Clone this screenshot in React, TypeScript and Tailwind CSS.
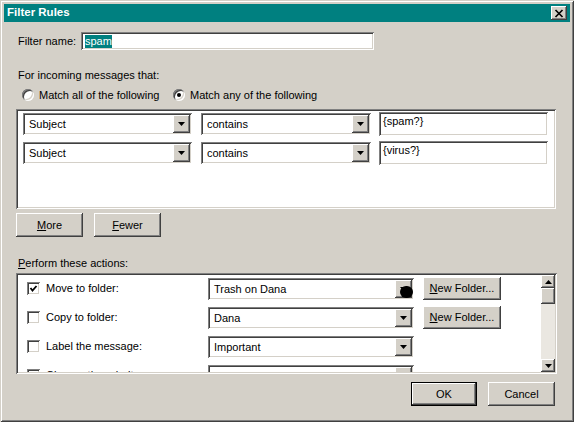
import React from 'react'

const sunken =
  'shadow-[inset_1px_1px_0_#808080,inset_-1px_-1px_0_#ffffff,inset_2px_2px_0_#404040,inset_-2px_-2px_0_#d4d0c8]'
const raised =
  'shadow-[inset_-1px_-1px_0_#404040,inset_1px_1px_0_#ffffff,inset_-2px_-2px_0_#808080,inset_2px_2px_0_#d4d0c8]'

function Arrow() {
  return (
    <svg width="7" height="4" viewBox="0 0 7 4">
      <path d="M0 0h7L3.5 4z" fill="#000" />
    </svg>
  )
}

function Dropdown({ value, width, cursor }: { value: string; width: string; cursor?: boolean }) {
  return (
    <div className={`relative flex h-[22px] bg-white p-[2px] ${width} ${sunken}`}>
      <div className="flex flex-1 items-center pl-[4px] leading-[14px]">{value}</div>
      <div className={`flex w-[17px] items-center justify-center bg-[#d4d0c8] ${raised}`}>
        <Arrow />
      </div>
      {cursor && <div className="absolute left-[192px] top-[8px] h-[12px] w-[13px] rounded-full bg-black" />}
    </div>
  )
}

function Button({ children, width, isDefault }: { children: React.ReactNode; width: string; isDefault?: boolean }) {
  if (isDefault) {
    return (
      <div className={`h-[24px] border border-black ${width}`}>
        <div className={`flex h-full items-center justify-center bg-[#d4d0c8] ${raised}`}>{children}</div>
      </div>
    )
  }
  return (
    <div className={`flex h-[24px] items-center justify-center bg-[#d4d0c8] ${width} ${raised}`}>{children}</div>
  )
}

function Radio({ checked }: { checked?: boolean }) {
  return (
    <div
      className={`flex h-[12px] w-[12px] items-center justify-center rounded-full bg-white shadow-[inset_1px_1px_0_#808080,inset_-1px_-1px_0_#ffffff,inset_2px_2px_0_#404040,inset_-2px_-2px_0_#d4d0c8]`}
    >
      {checked && <div className="h-[4px] w-[4px] rounded-full bg-black" />}
    </div>
  )
}

function Checkbox({ checked }: { checked?: boolean }) {
  return (
    <div className={`flex h-[13px] w-[13px] items-center justify-center bg-white ${sunken}`}>
      {checked && (
        <svg width="13" height="13" viewBox="0 0 13 13">
          <polyline points="3.5,6 5.5,8.5 9.5,4" fill="none" stroke="#000" strokeWidth="1.8" />
        </svg>
      )}
    </div>
  )
}

const actions = [
  { label: 'Move to folder:', value: 'Trash on Dana', checked: true, folder: true, cursor: true },
  { label: 'Copy to folder:', value: 'Dana', folder: true },
  { label: 'Label the message:', value: 'Important' },
  { label: 'Change the priority:', value: 'High' },
]

export default function App() {
  return (
    <div
      className={`flex h-[422px] w-[574px] flex-col bg-[#d4d0c8] font-['Liberation_Sans',Arial,sans-serif] text-[11px] text-black shadow-[inset_1px_1px_0_#d4d0c8,inset_-1px_-1px_0_#404040,inset_2px_2px_0_#ffffff,inset_-2px_-2px_0_#808080]`}
    >
      {/* title bar */}
      <div className="mx-[4px] mt-[4px] flex h-[18px] items-center justify-between bg-[#008080] pl-[3px] pr-[3px]">
        <span className="text-[11.5px] font-bold text-white">Filter Rules</span>
        <div className={`flex h-[14px] w-[16px] items-center justify-center bg-[#d4d0c8] ${raised}`}>
          <svg width="10" height="9" viewBox="0 0 10 9">
            <path d="M1.5 1L8.5 8M8.5 1L1.5 8" stroke="#000" strokeWidth="1.7" />
          </svg>
        </div>
      </div>

      <div className="flex flex-col px-[16px]">
        <div className="mt-[10px] flex h-[18px] items-center">
          <div className="w-[65px] pl-[2px]">Filter name:</div>
          <div className={`flex h-[18px] w-[293px] items-center bg-white pl-[4px] ${sunken}`}>
            <span className="bg-[#008080] leading-[13px] text-white">spam</span>
          </div>
        </div>

        <div className="mt-[18px] h-[14px] pl-[2px] leading-[14px]">For incoming messages that:</div>

        <div className="mt-[6px] flex h-[14px] items-center">
          <div className="ml-[6px] flex w-[151px] items-center gap-[5px]">
            <Radio />
            <span>Match all of the following</span>
          </div>
          <div className="flex items-center gap-[5px]">
            <Radio checked />
            <span>Match any of the following</span>
          </div>
        </div>

        {/* criteria */}
        <div className={`mt-[7px] flex h-[100px] w-[540px] flex-col gap-[5px] bg-white pl-[7px] pt-[3px] ${sunken}`}>
          {['{spam?}', '{virus?}'].map((v) => (
            <div key={v} className="flex h-[24px] items-center">
              <Dropdown value="Subject" width="w-[169px]" />
              <div className="ml-[9px]">
                <Dropdown value="contains" width="w-[170px]" />
              </div>
              <div className={`ml-[8px] h-[24px] w-[169px] bg-white pl-[4px] pt-[2px] leading-[14px] ${sunken}`}>{v}</div>
            </div>
          ))}
        </div>

        <div className="mt-[4px] flex gap-[11px]">
          <Button width="w-[67px]">
            <span>
              <u>M</u>ore
            </span>
          </Button>
          <Button width="w-[67px]">
            <span>
              <u>F</u>ewer
            </span>
          </Button>
        </div>

        <div className="mt-[19px] h-[14px] pl-[2px] leading-[14px]">
          <u>P</u>erform these actions:
        </div>

        {/* actions */}
        <div className={`mt-[3px] flex h-[101px] w-[541px] bg-white p-[2px] ${sunken}`}>
          <div className="flex flex-1 flex-col gap-[6px] overflow-hidden pl-[9px] pt-[2px]">
            {actions.map((a) => (
              <div key={a.label} className="flex h-[23px] shrink-0 items-center">
                <Checkbox checked={a.checked} />
                <div className="ml-[6px] w-[162px]">{a.label}</div>
                <Dropdown value={a.value} width="w-[206px]" cursor={a.cursor} />
                {a.folder && (
                  <div className="ml-[9px]">
                    <div className={`flex h-[23px] w-[78px] items-center justify-center bg-[#d4d0c8] ${raised}`}>
                      <span>
                        <u>N</u>ew Folder...
                      </span>
                    </div>
                  </div>
                )}
              </div>
            ))}
          </div>
          <div className="flex w-[14px] flex-col bg-[#eae7e1]">
            <div className={`flex h-[13px] items-center justify-center bg-[#d4d0c8] ${raised}`}>
              <svg width="7" height="4" viewBox="0 0 7 4">
                <path d="M0 4h7L3.5 0z" fill="#000" />
              </svg>
            </div>
            <div className={`h-[16px] bg-[#d4d0c8] ${raised}`} />
            <div className="flex-1" />
            <div className={`flex h-[13px] items-center justify-center bg-[#d4d0c8] ${raised}`}>
              <Arrow />
            </div>
          </div>
        </div>

        <div className="mt-[8px] flex justify-end gap-[11px] pr-[3px]">
          <Button width="w-[66px]" isDefault>
            OK
          </Button>
          <Button width="w-[67px]">Cancel</Button>
        </div>
      </div>
    </div>
  )
}
